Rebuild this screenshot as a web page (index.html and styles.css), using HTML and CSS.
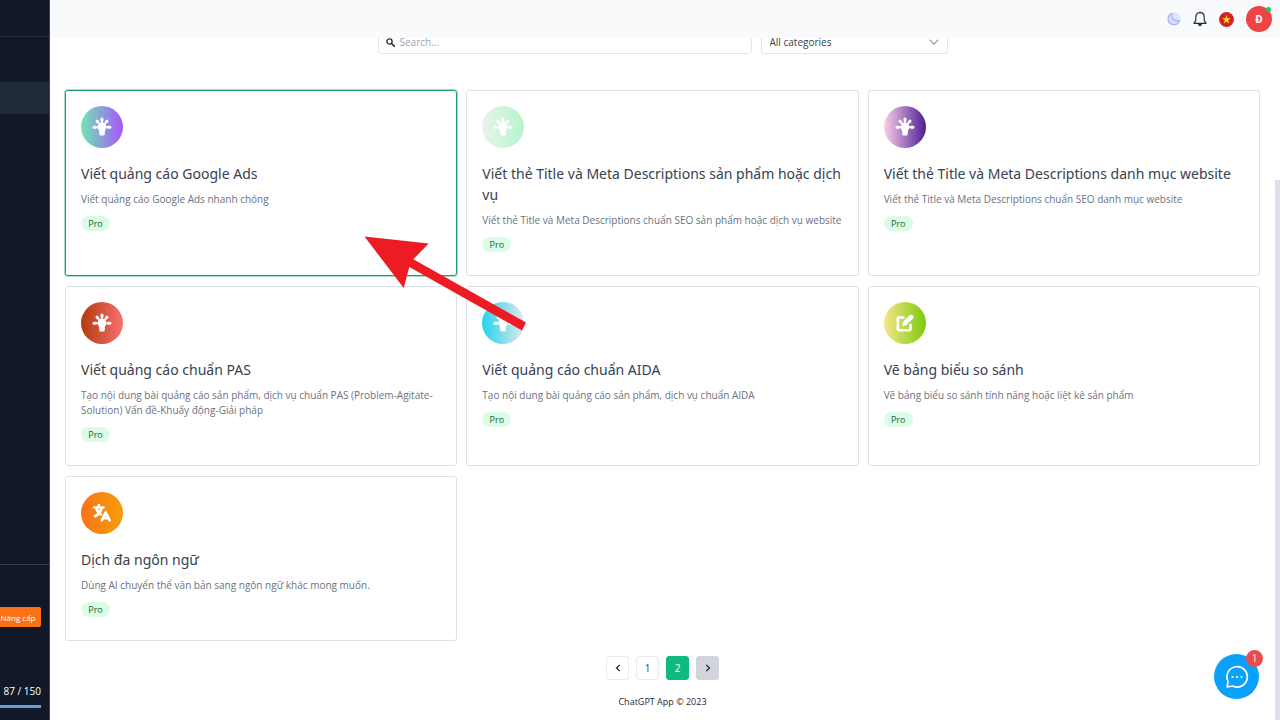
FILE: index.html
```
<!DOCTYPE html>
<html lang="vi">
<head>
<meta charset="utf-8">
<meta name="viewport" content="width=device-width, initial-scale=1">
<title>ChatGPT App</title>
<link rel="stylesheet" href="styles.css">
</head>
<body>
<svg class="defs" aria-hidden="true">
  <symbol id="bulb" viewBox="0 0 20 20">
    <path d="M5.500 10a4.500 4.500 0 0 1 9 0c0 1.900-1.200 2.700-1.700 3.900v3.200q0 1.500-1.500 1.500H8.700q-1.500 0-1.500-1.500v-3.200C6.700 12.700 5.500 11.900 5.500 10z" fill="currentColor"/>
    <path d="M10 2v1.500M5 4.200l.8.800M15 4.200l-.8.800M2 10.200h1.600M16.400 10.200H18" stroke="currentColor" stroke-width="3" stroke-linecap="round" fill="none"/>
    <path d="M10 3.500v3M6 5l2 2.500M14 5l-2 2.500M3.500 10.200h3M13.500 10.200h3" stroke="currentColor" stroke-width="1.300" fill="none"/>
  </symbol>
</svg>

<div class="app">
  <aside class="sidebar">
    <div class="sidebar-brand"></div>
    <nav class="sidebar-nav"><a class="nav-active" href="#" aria-label="Templates"></a></nav>
    <div class="sidebar-plan">
      <button class="upgrade" type="button">Nâng cấp</button>
      <div class="usage">
        <span>87 / 150</span>
        <div class="usage-bar"></div>
      </div>
    </div>
  </aside>

  <div class="page">
    <header class="topbar">
      <button class="icon-button" type="button" aria-label="Theme">
        <svg width="14" height="14" viewBox="0 0 14 14"><circle cx="7" cy="7" r="6.700" fill="#e0e4fd"/><path d="M5 1.600C2.700 2.500 1.100 4.600 1.100 7.200c0 3.200 2.500 5.600 5.700 5.600 2.600 0 4.800-1.500 5.700-3.900C8.300 10 3.700 6.500 5 1.600z" fill="#d8ddfd" stroke="#a5b0f3" stroke-width="1.100"/></svg>
      </button>
      <button class="icon-button" type="button" aria-label="Notifications">
        <svg width="14" height="16" viewBox="0 0 14 16" fill="none" stroke="#252b36" stroke-width="1.200" stroke-linejoin="round"><path d="M7 1.600C4.300 1.600 2.800 3.500 2.800 6v3.200L1 12.400h12l-1.800-3.200V6c0-2.500-1.500-4.400-4.200-4.400zM7 .4v1.200"/><path d="M5.300 13v.8c0 .8.700 1.400 1.700 1.400s1.700-.6 1.700-1.400V13z" fill="#252b36" stroke="none"/></svg>
      </button>
      <button class="icon-button" type="button" aria-label="Tiếng Việt">
        <svg width="15" height="15" viewBox="0 0 15 15"><circle cx="7.500" cy="7.500" r="7.400" fill="#d8201f"/><path d="M7.500 3.100l1 3.200h3.300L9.100 8.200l1.100 3.200-2.700-2-2.700 2 1.100-3.200-2.700-1.900h3.300z" fill="#ffe62e"/></svg>
      </button>
      <button class="avatar" type="button">Đ<span class="online"></span></button>
    </header>

    <main class="content">
      <form class="filters">
        <label class="search">
          <svg width="9" height="9" viewBox="0 0 9 9" fill="none" stroke="#30343b"><circle cx="3.500" cy="3.500" r="2.600" stroke-width="1.400"/><path d="M5.500 5.500l2.700 2.700" stroke-width="1.700" stroke-linecap="round"/></svg>
          <input type="text" placeholder="Search..." aria-label="Search">
        </label>
        <div class="category">
          <select aria-label="Category"><option>All categories</option></select>
          <svg class="chevron" width="10" height="6" viewBox="0 0 10 6" fill="none" stroke="#8f96a1" stroke-width="1.100"><path d="M.6.600L5 5.200 9.400.6"/></svg>
        </div>
      </form>

      <section class="cards">
        <article class="card selected">
          <div class="badge-icon mint"><svg><use href="#bulb"/></svg></div>
          <h2>Viết quảng cáo Google Ads</h2>
          <p>Viết quảng cáo Google Ads nhanh chóng</p>
          <span class="tag">Pro</span>
        </article>
        <article class="card">
          <div class="badge-icon pale"><svg><use href="#bulb"/></svg></div>
          <h2>Viết thẻ Title và Meta Descriptions sản phẩm hoặc dịch vụ</h2>
          <p>Viết thẻ Title và Meta Descriptions chuẩn SEO sản phẩm hoặc dịch vụ website</p>
          <span class="tag">Pro</span>
        </article>
        <article class="card">
          <div class="badge-icon plum"><svg><use href="#bulb"/></svg></div>
          <h2>Viết thẻ Title và Meta Descriptions danh mục website</h2>
          <p>Viết thẻ Title và Meta Descriptions chuẩn SEO danh mục website</p>
          <span class="tag">Pro</span>
        </article>
        <article class="card">
          <div class="badge-icon red"><svg><use href="#bulb"/></svg></div>
          <h2>Viết quảng cáo chuẩn PAS</h2>
          <p>Tạo nội dung bài quảng cáo sản phẩm, dịch vụ chuẩn PAS (Problem-Agitate-Solution) Vấn đề-Khuấy động-Giải pháp</p>
          <span class="tag">Pro</span>
        </article>
        <article class="card">
          <div class="badge-icon cyan"><svg><use href="#bulb"/></svg></div>
          <h2>Viết quảng cáo chuẩn AIDA</h2>
          <p>Tạo nội dung bài quảng cáo sản phẩm, dịch vụ chuẩn AIDA</p>
          <span class="tag">Pro</span>
        </article>
        <article class="card">
          <div class="badge-icon lime"><svg viewBox="0 0 20 20" fill="none"><path d="M8.500 4.500H4.300q-1.500 0-1.500 1.500v9.700q0 1.500 1.500 1.500H14q1.500 0 1.500-1.500v-4" stroke="currentColor" stroke-width="2.600" stroke-linecap="round"/><path d="M7.200 13l.7-4 5.700-5.700 3.300 3.300-5.700 5.700z" fill="currentColor"/><path d="M13.300 3.600l1.600-1.600q1.200-1 2.400.1l.8.800q1.100 1.200.1 2.400l-1.600 1.600z" fill="currentColor"/></svg></div>
          <h2>Vẽ bảng biểu so sánh</h2>
          <p>Vẽ bảng biểu so sánh tính năng hoặc liệt kê sản phẩm</p>
          <span class="tag">Pro</span>
        </article>
        <article class="card">
          <div class="badge-icon orange"><svg viewBox="0 0 20 20" fill="none" stroke="currentColor" stroke-width="2.700" stroke-linecap="round" stroke-linejoin="round"><path d="M2.200 4.500h9.200M6.800 2v2.300M4.300 5.500c.8 2.700 2.700 4.700 4.600 5.800M9.500 5.300C8.500 9.300 5.500 12 2.900 13.200"/><path d="M9.800 17.300L13.700 9.500l4 7.800M11.500 15.200h4.600"/></svg></div>
          <h2>Dịch đa ngôn ngữ</h2>
          <p>Dùng AI chuyển thể văn bản sang ngôn ngữ khác mong muốn.</p>
          <span class="tag">Pro</span>
        </article>
      </section>

      <nav class="pagination" aria-label="Pagination">
        <button type="button" aria-label="Previous"><svg width="6" height="8" viewBox="0 0 6 8"><path d="M4.700 1L1.500 4l3.200 3"/></svg></button>
        <button type="button">1</button>
        <button type="button" class="current">2</button>
        <button type="button" class="next" aria-label="Next"><svg width="6" height="8" viewBox="0 0 6 8"><path d="M1.300 1l3.200 3-3.200 3"/></svg></button>
      </nav>
      <footer class="footer">ChatGPT App © 2023</footer>
    </main>
  </div>
</div>

<svg class="pointer" width="164" height="96" viewBox="0 0 164 96" aria-hidden="true"><path d="M1.500 1.500l64.200 7L50.300 24.300 163 87.500l-4 8L46.300 32l-5.600 21z" fill="#ed1c24"/></svg>
<div class="scroll-thumb"></div>
<button class="chat" type="button" aria-label="Chat">
  <svg width="24" height="24" viewBox="0 0 24 24" fill="none"><path d="M2.200 22l.8-5.600A10.200 10.200 0 1 1 7.600 21z" stroke="#fff" stroke-width="1.700" stroke-linejoin="round"/><g fill="#fff"><circle cx="7.500" cy="12" r="1.100"/><circle cx="12" cy="12" r="1.100"/><circle cx="16.500" cy="12" r="1.100"/></g></svg>
  <span class="chat-count">1</span>
</button>
</body>
</html>
```
FILE: styles.css
```
* { box-sizing: border-box; }
body {
  margin: 0;
  background: #fff;
  color: #374151;
  font: 10px/15px "Open Sans", "Noto Sans", sans-serif;
}
button, input, select { font: inherit; color: inherit; margin: 0; }
button { padding: 0; border: 0; cursor: pointer; }
.defs { position: absolute; width: 0; height: 0; }
.app { display: flex; min-height: 100vh; }

.sidebar {
  flex: none;
  display: flex;
  flex-direction: column;
  width: 50px;
  overflow: hidden;
  background: #111827;
  border-right: 1px solid #384152;
  color: #fff;
}
.sidebar-brand { height: 37px; border-bottom: 1px solid #263041; }
.sidebar-nav { flex: 1; padding-top: 45px; }
.nav-active { display: block; height: 32px; background: #1f2937; }
.sidebar-plan {
  display: flex;
  flex-direction: column;
  align-items: flex-end;
  gap: 57px;
  padding: 42px 8px 13px 0;
  border-top: 1px solid #374151;
}
.upgrade {
  width: 46px;
  height: 20px;
  border-radius: 2px;
  background: #f97316;
  font-size: 8px;
  white-space: nowrap;
}
.usage { width: 100%; text-align: right; white-space: nowrap; }
.usage span { display: block; }
.usage-bar { height: 3px; margin-top: 6px; background: #659ce8; }

.page { flex: 1; min-width: 0; }
.topbar {
  position: fixed;
  z-index: 2;
  top: 0;
  left: 50px;
  right: 0;
  display: flex;
  align-items: center;
  justify-content: flex-end;
  gap: 12px;
  height: 38px;
  padding-right: 8px;
  background: #f9fafb;
}
.icon-button { display: flex; background: none; }
.avatar {
  position: relative;
  width: 26px;
  height: 26px;
  border-radius: 50%;
  background: #ef4444;
  color: #fff;
  font-weight: 700;
}
.online {
  position: absolute;
  top: 1px;
  right: 1px;
  width: 5px;
  height: 5px;
  border-radius: 50%;
  background: #22c55e;
}

.content { padding: 30px 20px 12px 15px; }
.filters {
  display: grid;
  grid-template-columns: 2fr 1fr;
  gap: 9px;
  max-width: 570px;
  margin: 0 auto 36px;
}
.search, .category {
  position: relative;
  display: flex;
  align-items: center;
  height: 24px;
  border: 1px solid #e2e5ea;
  border-radius: 3px;
}
.search { gap: 5px; padding-left: 7px; }
.search input { flex: 1; min-width: 0; padding: 0; border: 0; outline: 0; background: none; }
.search input::placeholder { color: #9ca3af; opacity: 1; }
.category select {
  width: 100%;
  padding: 0 8px;
  border: 0;
  background: none;
  appearance: none;
}
.chevron { position: absolute; right: 8px; pointer-events: none; }

.cards { display: grid; grid-template-columns: repeat(3, 1fr); gap: 10px 9px; }
.card {
  padding: 15px 12px 23px 15px;
  border: 1px solid #dde1ea;
  border-radius: 3px;
}
.selected { border-color: #1f9c6c; box-shadow: 0 0 0 1px #a7dcc7; }
.badge-icon {
  display: flex;
  align-items: center;
  justify-content: center;
  width: 42px;
  height: 42px;
  border-radius: 50%;
  color: #fff;
}
.badge-icon svg { width: 20px; height: 20px; }
.mint { background: linear-gradient(90deg, #6ee7b7, #a855f7); }
.pale { background: linear-gradient(90deg, #e9f3ed, #b5f5ca); }
.plum { background: linear-gradient(90deg, #fbcfe8, #4c1d95); }
.red { background: linear-gradient(90deg, #b23a0d, #f87171); }
.cyan { background: linear-gradient(90deg, #22d3ee, #e5e7eb); }
.lime { background: linear-gradient(90deg, #f8e58a, #7acb09); }
.orange { background: linear-gradient(90deg, #f97316, #f59e0b); }
.card h2 {
  margin: 15px 0 8px;
  color: #374151;
  font-family: "Noto Sans", "Open Sans", sans-serif;
  font-size: 14px;
  font-weight: 400;
  line-height: 21px;
}
.card p { margin: 0 0 9px; color: #6b7280; }
.tag {
  display: block;
  width: 29px;
  border-radius: 8px;
  background: #dcfce7;
  color: #166534;
  font-size: 9px;
  text-align: center;
}

.pagination { display: flex; justify-content: center; gap: 7px; margin-top: 15px; }
.pagination button {
  display: flex;
  align-items: center;
  justify-content: center;
  width: 23px;
  height: 24px;
  border: 1px solid #e9ebee;
  border-radius: 3px;
  background: #fff;
}
.pagination svg { fill: none; stroke: #252b36; stroke-width: 1.3; }
.pagination .current { border-color: #10b981; background: #10b981; color: #fff; }
.pagination .next { border-color: #d1d5db; background: #d1d5db; }
.footer { margin-top: 14px; color: #1f2937; font-size: 9px; text-align: center; }

.pointer { position: absolute; left: 363px; top: 235px; pointer-events: none; }
.scroll-thumb {
  position: fixed;
  top: 180px;
  right: 0;
  bottom: 0;
  width: 5px;
  background: #e0dfe9;
}
.chat {
  position: fixed;
  right: 21px;
  bottom: 21px;
  display: flex;
  align-items: center;
  justify-content: center;
  width: 45px;
  height: 45px;
  border-radius: 50%;
  background: #09a1fb;
}
.chat-count {
  position: absolute;
  top: -4px;
  right: -4px;
  width: 17px;
  height: 17px;
  border-radius: 50%;
  background: #e94b50;
  color: #fff;
  line-height: 17px;
}
```
